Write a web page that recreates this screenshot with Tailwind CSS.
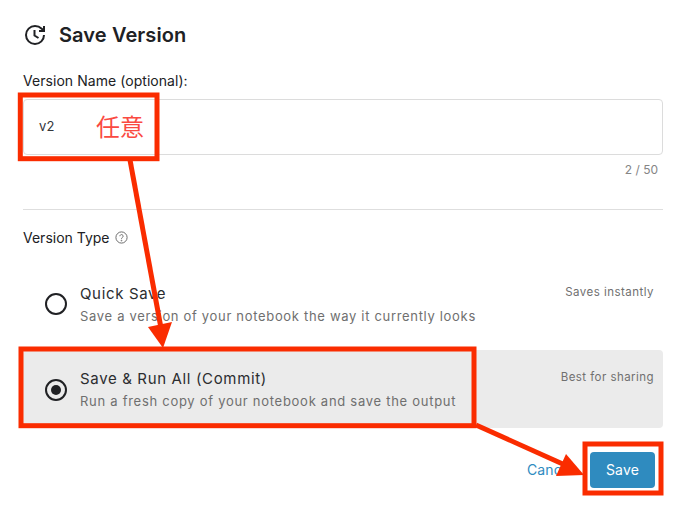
<!DOCTYPE html>
<html lang="en">
<head>
<meta charset="utf-8">
<script src="https://cdn.jsdelivr.net/npm/@tailwindcss/browser@4"></script>
</head>
<body class="bg-white">
<div class="relative w-[686px] h-[509px] overflow-hidden font-['Inter','Noto_Sans_CJK_JP',sans-serif] text-[#202124]">
  <div class="flex flex-col pl-[23px] pr-[23px] pt-[22px]">
    <div class="flex items-center h-[26px] gap-[12px]">
      <svg class="w-[24px] h-[24px]" viewBox="0 0 24 24" fill="none" stroke="#202124" stroke-width="2">
        <path d="M21 12a9 9 0 1 1-9-9c2.52 0 4.93 1 6.74 2.74L21 8"/>
        <path d="M21 3v5h-5"/>
        <path d="M11.500 7v5.500l4 2.500"/>
      </svg>
      <h1 class="text-[20px] leading-[26px] font-semibold tracking-[0.1px]">Save Version</h1>
    </div>
    <label class="mt-[24px] text-[14px] leading-[18px] tracking-[0.05px]">Version Name (optional):</label>
    <div class="mt-[9px] h-[56px] border border-[#dcdcdc] rounded-[4px] flex items-center pl-[15px] text-[13px] tracking-[0.3px] text-[#33363a]">v2</div>
    <div class="mt-[7px] pr-[5px] text-right text-[12px] leading-[16px] text-[#858585]">2 / 50</div>
    <div class="mt-[31px] border-t border-[#dedede]"></div>
    <div class="mt-[18px] flex items-center gap-[5px] h-[18px] text-[14px]">
      <span>Version Type</span>
      <svg class="w-[13px] h-[13px]" viewBox="0 0 13 13" fill="none" stroke="#6e6e6e" stroke-width="1">
        <circle cx="6.500" cy="6.500" r="5.600"/>
        <path d="M4.900 5.200a1.600 1.600 0 1 1 2.500 1.300c-.6.4-.9.7-.9 1.300"/>
        <circle cx="6.500" cy="9.600" r="0.400"/>
      </svg>
    </div>
    <div class="mt-[23px] h-[81px] flex items-start pl-[22px] pr-[9px]">
      <span class="w-[22px] h-[22px] rounded-full border-[2px] border-[#202124] shrink-0 mt-[24px]"></span>
      <div class="ml-[13px] flex-1 mt-[15px]">
        <div class="text-[15px] leading-[20px] tracking-[0.65px] text-[#2b2d30]">Quick Save</div>
        <div class="mt-[2px] text-[13px] leading-[20px] tracking-[0.68px] text-[#6f6f6f]">Save a version of your notebook the way it currently looks</div>
      </div>
      <div class="mt-[15px] text-[11.500px] leading-[16px] tracking-[0.47px] text-[#707070]">Saves instantly</div>
    </div>
    <div class="h-[78px] flex items-center pl-[22px] pr-[9px] bg-[#ebebeb] rounded-[4px]">
      <span class="w-[22px] h-[22px] rounded-full border-[2px] border-[#202124] shrink-0 flex items-center justify-center mt-[1px]"><span class="w-[10px] h-[10px] rounded-full bg-[#202124]"></span></span>
      <div class="ml-[13px] flex-1 mt-[2px]">
        <div class="text-[15px] leading-[20px] tracking-[0.65px] text-[#2b2d30]">Save &amp; Run All (Commit)</div>
        <div class="mt-[2px] text-[13px] leading-[20px] tracking-[0.72px] text-[#6f6f6f]">Run a fresh copy of your notebook and save the output</div>
      </div>
      <div class="self-start mt-[19px] text-[11.500px] leading-[16px] tracking-[0.45px] text-[#707070]">Best for sharing</div>
    </div>
    <div class="mt-[24px] flex items-center justify-end pr-[8px] gap-[16px]">
      <button class="text-[14px] tracking-[0.2px] text-[#2f8bbf] pb-[1px]">Cancel</button>
      <button class="w-[65px] h-[36px] rounded-[4px] bg-[#2f8bbf] text-white text-[14px] tracking-[0.2px] pb-[1px]">Save</button>
    </div>
  </div>

  <div class="absolute left-[96px] top-[112px] text-[24px] leading-[28px] text-[#fa4a42] font-['Noto_Sans_CJK_JP',sans-serif]">任意</div>

  <svg class="absolute left-0 top-0 w-[686px] h-[509px]" viewBox="0 0 686 509" fill="none">
    <rect x="20.300" y="95" width="136.700" height="63.700" stroke="#fa2c00" stroke-width="5"/>
    <rect x="21" y="349" width="453" height="76.700" stroke="#fa2c00" stroke-width="5"/>
    <rect x="585" y="444" width="76" height="49" stroke="#fa2c00" stroke-width="5"/>
    <path d="M130 160 L161 328" stroke="#fa2c00" stroke-width="5"/>
    <path d="M148 327 L172 322 L163 348 Z" fill="#fa2c00"/>
    <path d="M476 425 L565 465" stroke="#fa2c00" stroke-width="5"/>
    <path d="M566 454 L584 475 L556 476 Z" fill="#fa2c00"/>
  </svg>
</div>
</body>
</html>
